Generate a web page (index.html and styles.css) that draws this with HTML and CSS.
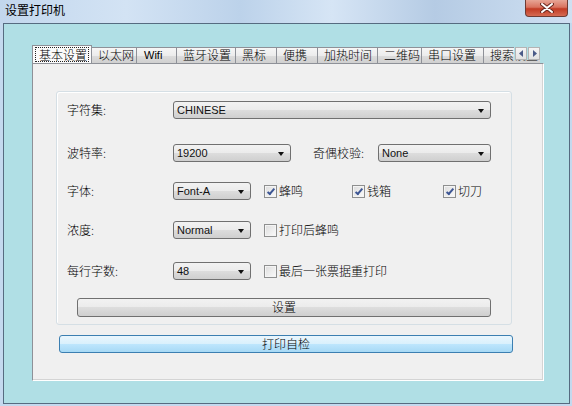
FILE: index.html
```html
<!doctype html>
<html lang="zh-CN">
<head>
  <meta charset="utf-8">
  <title>设置打印机</title>
  <link rel="stylesheet" href="styles.css">
</head>
<body class="app">
  <div class="window">
    <div class="titlebar">
      <span class="title">设置打印机</span>
      <div class="close">
        <svg width="14" height="10" viewBox="0 0 14 10">
          <path d="M2 1 L12 9 M12 1 L2 9" stroke="#6b2a20" stroke-width="4" stroke-linecap="round"/>
          <path d="M2 1 L12 9 M12 1 L2 9" stroke="#ffffff" stroke-width="2" stroke-linecap="round"/>
        </svg>
      </div>
    </div>

    <div class="client">
      <div class="tabs">
        <div class="tab-strip">
          <div class="tab active"><span class="focus">基本设置</span></div>
          <div class="tab">以太网</div>
          <div class="tab latin">Wifi</div>
          <div class="tab">蓝牙设置</div>
          <div class="tab">黑标</div>
          <div class="tab">便携</div>
          <div class="tab">加热时间</div>
          <div class="tab">二维码</div>
          <div class="tab">串口设置</div>
          <div class="tab">搜索设置</div>
          <div class="scroll-arrows">
            <span class="arrow">
              <svg width="5" height="7" viewBox="0 0 5 7"><path d="M4 0 L0 3.5 L4 7 Z" fill="#4a5a88"/></svg>
            </span>
            <span class="arrow">
              <svg width="5" height="7" viewBox="0 0 5 7"><path d="M1 0 L5 3.5 L1 7 Z" fill="#4a5a88"/></svg>
            </span>
          </div>
        </div>

        <div class="tab-panel">
          <div class="group">
            <div class="row row-1">
              <span class="label">字符集:</span>
              <div class="combo combo-wide"><span>CHINESE</span><i class="caret"></i></div>
            </div>
            <div class="row row-2">
              <span class="label">波特率:</span>
              <div class="combo combo-mid"><span>19200</span><i class="caret"></i></div>
              <span class="label label-parity">奇偶校验:</span>
              <div class="combo combo-parity"><span>None</span><i class="caret"></i></div>
            </div>
            <div class="row row-3">
              <span class="label">字体:</span>
              <div class="combo combo-small"><span>Font-A</span><i class="caret"></i></div>
              <label class="check check-1"><i class="box checked"></i>蜂鸣</label>
              <label class="check check-2"><i class="box checked"></i>钱箱</label>
              <label class="check"><i class="box checked"></i>切刀</label>
            </div>
            <div class="row row-4">
              <span class="label">浓度:</span>
              <div class="combo combo-small"><span>Normal</span><i class="caret"></i></div>
              <label class="check"><i class="box"></i>打印后蜂鸣</label>
            </div>
            <div class="row row-5">
              <span class="label">每行字数:</span>
              <div class="combo combo-small"><span>48</span><i class="caret"></i></div>
              <label class="check"><i class="box"></i>最后一张票据重打印</label>
            </div>
            <div class="btn btn-set">设置</div>
          </div>
          <div class="btn btn-test">打印自检</div>
        </div>
      </div>
    </div>
  </div>
</body>
</html>
```

FILE: styles.css
```css
.app {
  margin: 0;
  padding: 0;
  font-family: 'Noto Sans CJK SC', 'DejaVu Sans', sans-serif;
  font-size: 12px;
  font-weight: 300;
  color: #000;
}

.window {
  width: 572px;
  height: 406px;
  display: flex;
  flex-direction: column;
  background: #c4d9ee;
  box-sizing: border-box;
}

/* title bar */

.titlebar {
  height: 23px;
  flex: none;
  display: flex;
  justify-content: space-between;
  align-items: flex-start;
  padding: 0 4px 0 5px;
  background: linear-gradient(90deg, #c2d7ed 0%, #d3e3f4 22%, #bcd2ea 42%, #d6e5f5 58%, #b5cbe4 76%, #cfe0f2 100%);
}

.title {
  line-height: 20px;
  font-size: 12px;
  font-weight: 400;
}

.close {
  width: 43px;
  height: 17px;
  box-sizing: border-box;
  border: 1px solid #6e3b33;
  border-top: 0;
  border-radius: 0 0 4px 4px;
  background: linear-gradient(#e7a595 0%, #d9735f 45%, #c23b24 55%, #d56a52 100%);
  display: flex;
  justify-content: center;
  align-items: center;
}

/* client */

.client {
  flex: 1;
  margin: 0 2px 2px 3px;
  border: 1px solid #566b80;
  background: #b0dfe5;
  padding: 21px 0 0 28px;
}

.tabs {
  width: 512px;
}

.tab-strip {
  position: relative;
  height: 18px;
  display: flex;
  align-items: flex-end;
  overflow: hidden;
  width: 508px;
}

.tab {
  flex: none;
  height: 16px;
  box-sizing: border-box;
  margin-left: -1px;
  padding-left: 6px;
  border: 1px solid #8e9198;
  border-bottom: 0;
  background: linear-gradient(#f6f6f6 0%, #ececec 50%, #dddddd 50%, #d0d0d0 100%);
  line-height: 14px;
  white-space: nowrap;
  overflow: hidden;
}

.tab:nth-child(1) { width: 60px; margin-left: 0; }
.tab:nth-child(2) { width: 46px; }
.tab:nth-child(3) { width: 41px; }
.tab:nth-child(4) { width: 60px; }
.tab:nth-child(5) { width: 42px; }
.tab:nth-child(6) { width: 42px; }
.tab:nth-child(7) { width: 61px; }
.tab:nth-child(8) { width: 45px; }
.tab:nth-child(9) { width: 63px; }
.tab:nth-child(10) { width: 60px; }

.tab.latin {
  font-family: 'Liberation Sans', sans-serif;
  font-size: 11px;
  font-weight: normal;
  padding-left: 7px;
}

.tab.active {
  height: 19px;
  padding: 1px 2px 0;
  background: #fbfbfb;
  position: relative;
  z-index: 1;
  margin-bottom: -1px;
}

.focus {
  display: block;
  border: 1px dotted #222;
  padding: 0 3px;
  line-height: 13px;
}

.scroll-arrows {
  position: absolute;
  right: 0;
  top: 2px;
  display: flex;
  gap: 1px;
  background: #b0dfe5;
  padding-left: 1px;
}

.arrow {
  width: 12px;
  height: 13px;
  box-sizing: border-box;
  border: 1px solid #b4b4b4;
  background: linear-gradient(#f5f5f5, #e2e2e2);
  display: flex;
  justify-content: center;
  align-items: center;
}

.tab-panel {
  height: 318px;
  box-sizing: border-box;
  border: 1px solid;
  border-color: #8e9198 #ffffff #ffffff #8e9198;
  box-shadow: inset -1px -1px 0 #d4d4d4;
  background: #f0f0f0;
  padding: 27px 0 0 23px;
}

/* group box */

.group {
  width: 456px;
  height: 234px;
  box-sizing: border-box;
  border: 1px solid #d5dfe5;
  border-radius: 3px;
  box-shadow: inset 1px 1px 0 #ffffff;
  padding: 9px 0 0 10px;
}

.row {
  height: 18px;
  display: flex;
  align-items: center;
}

.row-2 { margin-top: 25px; }
.row-3 { margin-top: 20px; }
.row-4 { margin-top: 21px; }
.row-5 { margin-top: 23px; }

.label {
  width: 106px;
  flex: none;
  line-height: 16px;
}

.label-parity {
  width: 65px;
  margin-left: 22px;
}

.combo {
  height: 18px;
  box-sizing: border-box;
  border: 1px solid #707070;
  border-radius: 3px;
  background: linear-gradient(#f2f2f2 0%, #ebebeb 50%, #dddddd 50%, #cfcfcf 100%);
  display: flex;
  align-items: center;
  justify-content: space-between;
  padding: 0 6px 0 3px;
  font-family: 'Liberation Sans', sans-serif;
  font-size: 11px;
  font-weight: normal;
  color: #111;
  flex: none;
}

.combo-wide { width: 318px; }
.combo-mid { width: 118px; }
.combo-parity { width: 113px; }
.combo-small { width: 78px; }

.caret {
  width: 0;
  height: 0;
  border-left: 3.5px solid transparent;
  border-right: 3.5px solid transparent;
  border-top: 4px solid #111;
  margin-top: 1px;
}

.check {
  display: flex;
  align-items: center;
  gap: 2px;
  line-height: 16px;
  flex: none;
}

.row-3 .check,
.row-4 .check,
.row-5 .check {
  margin-left: 13px;
}

.row-3 .check-1 { width: 75px; }
.row-3 .check-2 { width: 78px; }

.box {
  width: 13px;
  height: 13px;
  box-sizing: border-box;
  border: 1px solid #8e8f8f;
  background: linear-gradient(135deg, #dcdcdc, #fbfbfb);
  box-shadow: inset 0 0 0 1px #f4f4f4;
  position: relative;
}

.box.checked::after {
  content: '';
  position: absolute;
  left: 4px;
  top: 1px;
  width: 2px;
  height: 6px;
  border: solid #3d5694;
  border-width: 0 2px 2px 0;
  transform: rotate(40deg);
}

/* buttons */

.btn {
  box-sizing: border-box;
  border-radius: 3px;
  text-align: center;
}

.btn-set {
  width: 414px;
  height: 19px;
  margin: 18px 0 0 10px;
  border: 1px solid #707070;
  background: linear-gradient(#f2f2f2 0%, #ebebeb 50%, #dddddd 50%, #cfcfcf 100%);
  line-height: 16px;
}

.btn-test {
  width: 454px;
  height: 18px;
  margin: 10px 0 0 3px;
  border: 1px solid #3c7fb1;
  background: linear-gradient(#eaf6fd 0%, #d9f0fc 50%, #bee6fd 50%, #a7d9f5 100%);
  line-height: 16px;
}
```
